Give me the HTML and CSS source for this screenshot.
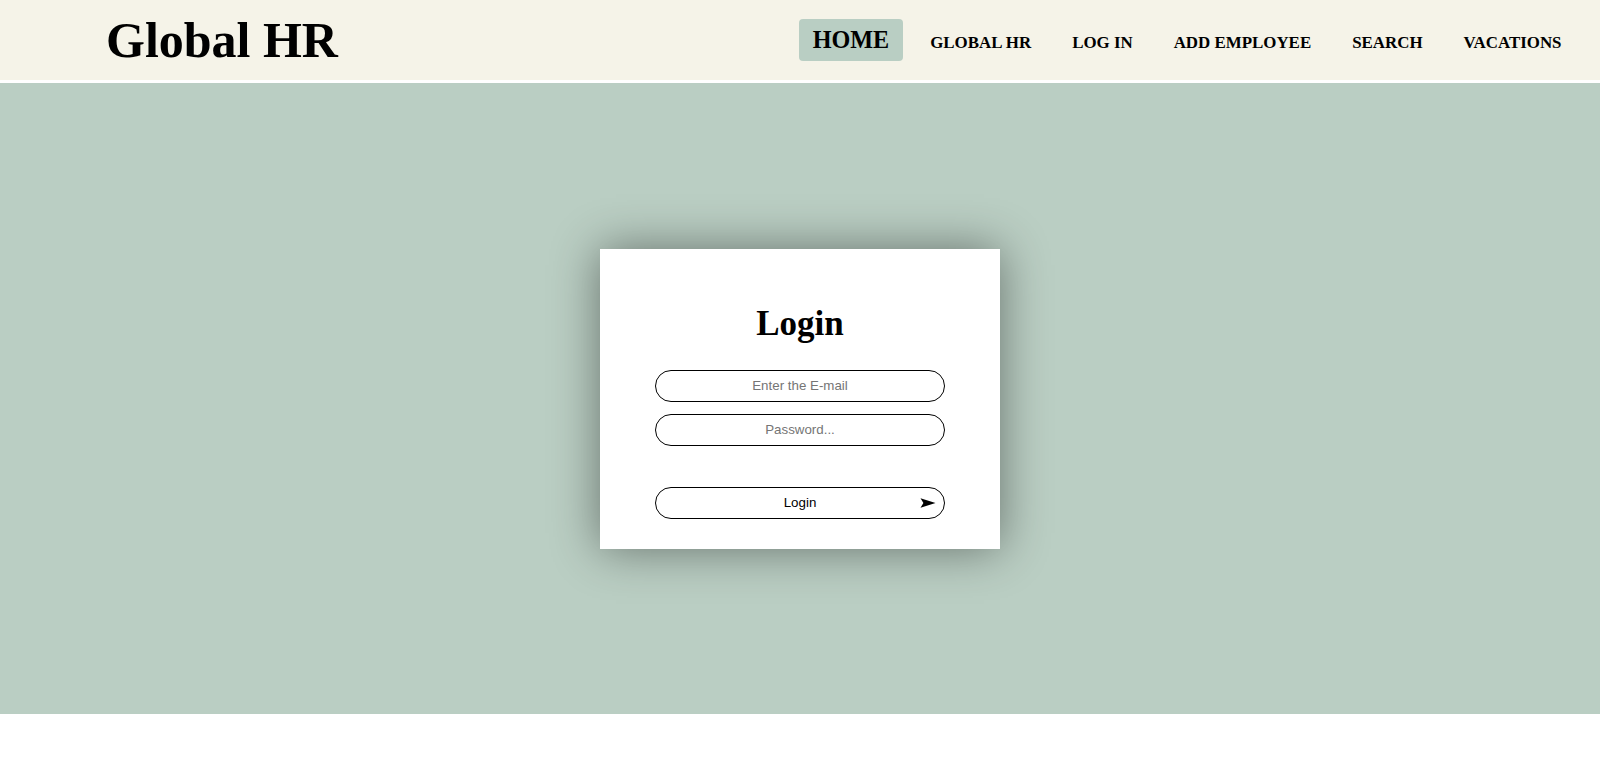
FILE: index.html
```html
<!DOCTYPE html>
<html lang="en">
<head>
<meta charset="utf-8">
<title>Global HR</title>
<link rel="stylesheet" href="styles.css">
</head>
<body>
<header class="topbar">
  <h1 class="brand">Global HR</h1>
  <nav class="nav">
    <a class="nav-link active" href="#">HOME</a>
    <a class="nav-link" href="#">GLOBAL HR</a>
    <a class="nav-link" href="#">LOG IN</a>
    <a class="nav-link" href="#">ADD EMPLOYEE</a>
    <a class="nav-link" href="#">SEARCH</a>
    <a class="nav-link" href="#">VACATIONS</a>
  </nav>
</header>
<main class="hero">
  <form class="card">
    <h2 class="card-title">Login</h2>
    <input class="field field-email" type="email" placeholder="Enter the E-mail">
    <input class="field" type="password" placeholder="Password...">
    <button class="submit" type="button">Login
      <svg class="arrow" width="16" height="10" viewBox="0 0 16 10"><path d="M0.5 0.3 L15.5 5 L0.5 9.7 L3.4 5 Z" fill="#000"/></svg>
    </button>
  </form>
</main>
</body>
</html>
```
FILE: styles.css
```css
* { box-sizing: border-box; }
html, body { margin: 0; padding: 0; background: #ffffff; }
body { font-family: "Liberation Serif", "Times New Roman", serif; color: #000; }

.topbar {
  height: 83px;
  background: #f5f3e8;
  border-bottom: 3px solid #ffffff;
  display: flex;
  align-items: center;
  justify-content: space-between;
  padding: 0 25px 0 106px;
}
.brand {
  margin: 0;
  font-size: 50px;
  font-weight: bold;
  line-height: 57px;
}
.nav {
  display: flex;
  align-items: baseline;
  gap: 14px;
}
.nav-link {
  color: #000;
  text-decoration: none;
  font-weight: bold;
  font-size: 16.9px;
  padding: 7px 13.5px;
  border-radius: 4px;
}
.nav-link.active {
  font-size: 24.2px;
  background: #b9cec3;
  padding: 7px 13.5px;
}

.hero {
  height: 631px;
  background: #bacec3;
  display: flex;
  align-items: center;
  justify-content: center;
}
.card {
  width: 400px;
  height: 300px;
  background: #fff;
  box-shadow: 0 0 45px rgba(0, 0, 0, 0.45);
  display: flex;
  flex-direction: column;
  align-items: center;
  padding-top: 55px;
}
.card-title {
  margin: 0 0 26px;
  font-size: 35px;
  line-height: 40px;
  font-weight: bold;
}
.field {
  width: 290px;
  height: 32px;
  border: 1px solid #000;
  border-radius: 16px;
  background: #fff;
  text-align: center;
  font-family: "Liberation Sans", Arial, sans-serif;
  font-size: 13.33px;
  margin: 0;
  outline: none;
}
.field::placeholder { color: #757575; }
.field-email { margin-bottom: 12px; }
.submit {
  position: relative;
  margin-top: 41px;
  width: 290px;
  height: 32px;
  border: 1px solid #000;
  border-radius: 16px;
  background: #fff;
  font-family: "Liberation Sans", Arial, sans-serif;
  font-size: 13.33px;
  color: #000;
  padding: 0;
}
.arrow {
  position: absolute;
  right: 8px;
  top: 10px;
}
```
